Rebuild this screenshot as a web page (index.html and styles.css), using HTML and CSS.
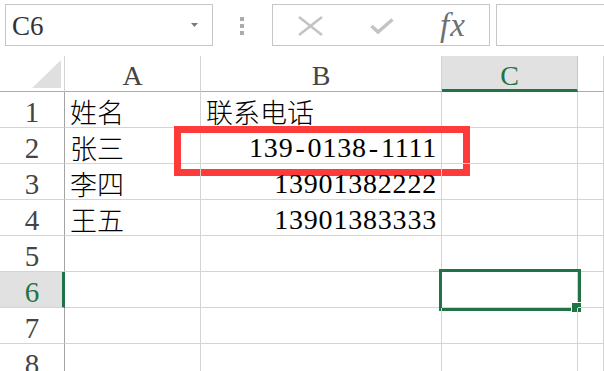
FILE: index.html
```html
<!DOCTYPE html>
<html>
<head>
  <title>Sheet</title>
  <link rel="stylesheet" href="styles.css">
</head>
<body>

  <div class="toolbar">
    <div class="namebox">
      <span>C6</span>
      <svg class="arrow" width="7" height="4" viewBox="0 0 7 4"><polygon points="0,0 7,0 3.5,4" fill="#7a7a7a"/></svg>
    </div>
    <div class="grip"><i></i><i></i><i></i></div>
    <div class="fxbox">
      <svg class="cancel" width="25" height="20" viewBox="0 0 25 20">
        <path d="M1 1 L24 19 M24 1 L1 19" stroke="#c4c4c4" stroke-width="2.6" fill="none"/>
      </svg>
      <svg class="enter" width="24" height="16" viewBox="0 0 24 16">
        <path d="M1.5 8 L8 14 L22.5 1.5" stroke="#c4c4c4" stroke-width="3.6" fill="none"/>
      </svg>
      <span class="fx">fx</span>
    </div>
    <div class="formula"></div>
  </div>

  <div class="sheet">
    <div class="corner">
      <svg width="29" height="28" viewBox="0 0 29 28"><polygon points="29,0 29,28 0,28" fill="#dfdfdf"/></svg>
    </div>
    <div class="colhead">A</div>
    <div class="colhead">B</div>
    <div class="colhead active">C</div>
    <div class="colhead"></div>

    <div class="rowhead">1</div>
    <div class="cell">姓名</div>
    <div class="cell">联系电话</div>
    <div class="cell"></div>
    <div class="cell"></div>

    <div class="rowhead">2</div>
    <div class="cell">张三</div>
    <div class="cell num">139<span class="dash">-</span>0138<span class="dash">-</span>1111<div class="mark"></div></div>
    <div class="cell"></div>
    <div class="cell"></div>

    <div class="rowhead">3</div>
    <div class="cell">李四</div>
    <div class="cell num">13901382222</div>
    <div class="cell"></div>
    <div class="cell"></div>

    <div class="rowhead">4</div>
    <div class="cell">王五</div>
    <div class="cell num">13901383333</div>
    <div class="cell"></div>
    <div class="cell"></div>

    <div class="rowhead">5</div>
    <div class="cell"></div>
    <div class="cell"></div>
    <div class="cell"></div>
    <div class="cell"></div>

    <div class="rowhead active">6</div>
    <div class="cell"></div>
    <div class="cell"></div>
    <div class="cell selected"><div class="selbox"></div><div class="handle"></div></div>
    <div class="cell"></div>

    <div class="rowhead">7</div>
    <div class="cell"></div>
    <div class="cell"></div>
    <div class="cell"></div>
    <div class="cell"></div>

    <div class="rowhead">8</div>
    <div class="cell"></div>
    <div class="cell"></div>
    <div class="cell"></div>
    <div class="cell"></div>
  </div>

</body>
</html>
```

FILE: styles.css
```css
html, body {
  margin: 0;
  height: 100%;
  overflow: hidden;
  background: #fff;
}

body {
  font-family: 'Liberation Serif', 'Noto Sans CJK SC', serif;
  color: #000;
}

/* top bar */
.toolbar {
  display: flex;
  align-items: flex-start;
  height: 56px;
  padding-top: 4px;
  box-sizing: border-box;
}

.namebox {
  margin-left: 5px;
  width: 208px;
  height: 42px;
  box-sizing: border-box;
  border: 1px solid #c6c6c6;
  display: flex;
  align-items: center;
  padding-left: 6px;
  font-size: 27px;
  color: #333;
}

.namebox span {
  padding-top: 2px;
}

.namebox .arrow {
  margin-left: auto;
  margin-right: 14px;
}

.grip {
  margin-left: 27px;
  margin-top: 13px;
  display: flex;
  flex-direction: column;
  gap: 3px;
}

.grip i {
  display: block;
  width: 4px;
  height: 4px;
  background: #ababab;
}

.fxbox {
  margin-left: 28px;
  width: 218px;
  height: 42px;
  box-sizing: border-box;
  border: 1px solid #c6c6c6;
  display: flex;
  align-items: center;
}

.cancel {
  margin-left: 25px;
  margin-top: 2px;
}

.enter {
  margin-left: 47px;
  margin-top: 2px;
}

.fx {
  margin-left: 46px;
  font-style: italic;
  font-size: 33px;
  color: #707070;
  letter-spacing: 1px;
}

.formula {
  margin-left: 6px;
  flex: 1;
  height: 42px;
  box-sizing: border-box;
  border: 1px solid #c6c6c6;
  border-right: none;
}

/* grid */
.sheet {
  display: grid;
  grid-template-columns: 65px 136px 241px 136px 1fr;
  grid-auto-rows: 36px;
}

.sheet > div {
  box-sizing: border-box;
  border-right: 1px solid #d4d4d4;
  border-bottom: 1px solid #d4d4d4;
}

.corner {
  display: flex;
  align-items: flex-end;
  justify-content: flex-end;
  padding: 0 3px 3px 0;
  border-bottom-color: #ababab !important;
}

.colhead {
  display: flex;
  align-items: center;
  justify-content: center;
  font-size: 28px;
  color: #444;
  padding-top: 4px;
  border-bottom-color: #ababab !important;
}

.colhead.active {
  background: #e1e1e1;
  color: #217346;
  border-right-color: #c6c6c6 !important;
  border-bottom: 3px solid #217346 !important;
  padding-top: 6px;
}

.rowhead {
  display: flex;
  align-items: center;
  justify-content: center;
  font-size: 29px;
  color: #444;
  padding-top: 5px;
  border-right-color: #a5a5a5 !important;
}

.rowhead.active {
  background: #e1e1e1;
  color: #217346;
  border-right: 3px solid #217346 !important;
  padding-left: 2px;
}

.cell {
  position: relative;
  display: flex;
  align-items: center;
  padding: 4px 5px 0 5px;
  font-size: 27px;
  font-weight: 300;
  white-space: nowrap;
}

.cell.num {
  justify-content: flex-end;
  font-size: 28px;
  font-weight: normal;
  letter-spacing: 0.8px;
  padding-right: 4px;
}

.dash {
  padding: 0 2px;
}

.mark {
  position: absolute;
  left: -27px;
  top: -2px;
  width: 296px;
  height: 50px;
  box-sizing: border-box;
  border: 7px solid #fe3b3b;
}

.selbox {
  position: absolute;
  left: -3px;
  top: -3px;
  width: 142px;
  height: 42px;
  box-sizing: border-box;
  border: 3px solid #217346;
}

.handle {
  position: absolute;
  left: 129px;
  top: 30px;
  width: 9px;
  height: 9px;
  background: #217346;
  border: 1px solid #fff;
}
```
